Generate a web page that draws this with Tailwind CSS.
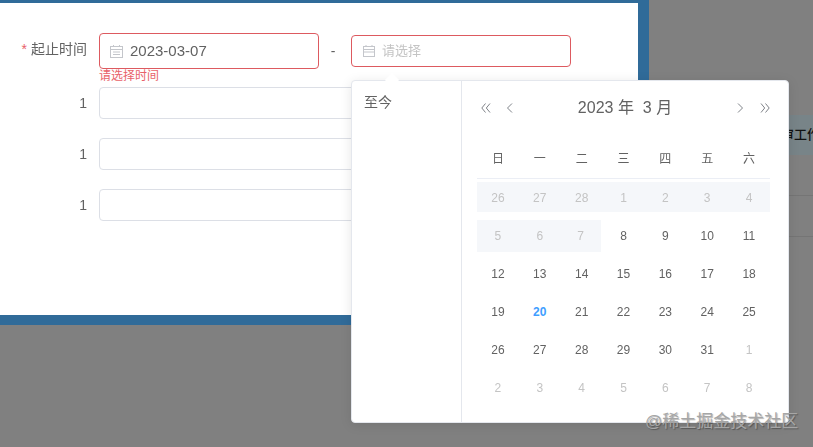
<!DOCTYPE html>
<html lang="zh-CN">
<head>
    <meta charset="UTF-8">
    <title>起止时间</title>
    <script src="https://cdn.jsdelivr.net/npm/@tailwindcss/browser@4"></script>
</head>
<body class="relative flex h-[447px] w-[813px] overflow-hidden bg-[#808080] font-['Liberation_Sans','Noto_Sans_CJK_SC',sans-serif] text-[#606266]">

    <!-- Dialog -->
    <div class="h-[325px] w-[649px] shrink-0 bg-[#306b99] pt-[3px] pr-[11px] pb-[10px]">
        <div class="h-full bg-white pt-[30px]">

            <div class="flex items-center">
                <label class="w-[87px] pb-[3px] text-right text-[14px] leading-[33px]"><span class="mr-1 text-[#e8626a]">*</span><span class="grayscale">起止时间</span></label>
                <div class="ml-[12px] flex h-[36px] w-[220px] items-center rounded border border-[#dd5a60] pl-[10px] text-[15px]">
                    <svg class="mr-[7px] h-[13px] w-[13px] text-[#c4c6cb]" viewBox="0 0 13 13" fill="none" stroke="currentColor"><rect x="0.5" y="1.5" width="12" height="11"/><path d="M0.5 4.5h12M3 7h7M3 9.5h7M3.500 0v2M9.500 0v2"/></svg>
                    <span class="grayscale">2023-03-07</span>
                </div>
                <span class="w-[32px] pr-[4px] text-center text-[14px] grayscale">-</span>
                <div class="flex h-[32px] w-[220px] items-center rounded border border-[#dd5a60] pl-[11px] text-[13px] text-[#c0c4cc]">
                    <svg class="mr-[7px] h-[12px] w-[12px] text-[#c4c6cb]" viewBox="0 0 12 12" fill="none" stroke="currentColor"><rect x="0.5" y="1.5" width="11" height="10"/><path d="M0.5 4.500h11M0.5 7h11M3 0v2M9 0v2"/></svg>
                    <span class="grayscale">请选择</span>
                </div>
            </div>
            <p class="ml-[99px] h-[18px] text-[12px] leading-[14px] text-[#e8626a]">请选择时间</p>

            <div class="flex flex-col gap-[19px]">
                <div class="flex items-center">
                    <label class="w-[87px] text-right text-[14px] grayscale">1</label>
                    <div class="ml-[12px] h-[32px] w-[300px] rounded border border-[#dcdfe6]"></div>
                </div>
                <div class="flex items-center">
                    <label class="w-[87px] text-right text-[14px] grayscale">1</label>
                    <div class="ml-[12px] h-[32px] w-[300px] rounded border border-[#dcdfe6]"></div>
                </div>
                <div class="flex items-center">
                    <label class="w-[87px] text-right text-[14px] grayscale">1</label>
                    <div class="ml-[12px] h-[32px] w-[300px] rounded border border-[#dcdfe6]"></div>
                </div>
            </div>
        </div>
    </div>

    <!-- Page behind the mask -->
    <div class="flex-1 pt-[115px]">
        <div class="flex h-[40px] items-center bg-[#788488] pl-[132px] text-[13px] whitespace-nowrap text-[#111]"><span class="font-medium">审工作</span></div>
        <div class="h-[41px] border-b border-[#757575]"></div>
        <div class="h-[41px] border-b border-[#757575]"></div>
    </div>

    <!-- Date picker popover -->
    <div class="absolute top-[80px] left-[351px] flex h-[343px] w-[438px] rounded border border-[#e4e7ed] bg-white shadow-[0_2px_12px_rgba(0,0,0,0.1)]">
        <div class="absolute -top-[6px] left-[35px] h-[10px] w-[10px] rotate-45 bg-white"></div>
        <div class="relative w-[110px] border-r border-[#e4e7ed] pt-[13px] pl-[12px] text-[14px] leading-[16px]"><span class="grayscale">至今</span></div>
        <div class="relative flex-1 pt-[17px] pr-[18px] pl-[15px]">
            <div class="flex h-[20px] items-center">
                <svg class="ml-[4px] h-[10px] w-[10px]" viewBox="0 0 10 10" fill="none" stroke="#7f8288"><path d="M4.500 0.500 0.800 5l3.700 4.500M9 0.500 5.300 5 9 9.500"/></svg>
                <svg class="ml-[15px] h-[10px] w-[7px]" viewBox="0 0 7 10" fill="none" stroke="#7f8288"><path d="M6 0.500 1.500 5 6 9.500"/></svg>
                <span class="flex-1 text-center text-[16px] whitespace-pre grayscale">2023 年  3 月</span>
                <svg class="h-[10px] w-[7px]" viewBox="0 0 7 10" fill="none" stroke="#7f8288"><path d="M1 0.500 5.500 5 1 9.500"/></svg>
                <svg class="ml-[16px] h-[10px] w-[10px]" viewBox="0 0 10 10" fill="none" stroke="#7f8288"><path d="M1 0.500 4.700 5 1 9.500M5.500 0.500 9.200 5 5.500 9.500"/></svg>
            </div>

            <div class="mt-[21px] grid h-[40px] grid-cols-7 border-b border-[#ebeef5] text-center text-[12px] leading-[40px]">
                <span class="grayscale">日</span><span class="grayscale">一</span><span class="grayscale">二</span><span class="grayscale">三</span><span class="grayscale">四</span><span class="grayscale">五</span><span class="grayscale">六</span>
            </div>

            <div class="grid grid-cols-7 text-center text-[12px]">
                <div class="mt-[3px] mb-[5px] h-[30px] bg-[#f5f7fa] leading-[32px] text-[#c0c4cc]"><span class="grayscale">26</span></div>
                <div class="mt-[3px] mb-[5px] h-[30px] bg-[#f5f7fa] leading-[32px] text-[#c0c4cc]"><span class="grayscale">27</span></div>
                <div class="mt-[3px] mb-[5px] h-[30px] bg-[#f5f7fa] leading-[32px] text-[#c0c4cc]"><span class="grayscale">28</span></div>
                <div class="mt-[3px] mb-[5px] h-[30px] bg-[#f5f7fa] leading-[32px] text-[#c0c4cc]"><span class="grayscale">1</span></div>
                <div class="mt-[3px] mb-[5px] h-[30px] bg-[#f5f7fa] leading-[32px] text-[#c0c4cc]"><span class="grayscale">2</span></div>
                <div class="mt-[3px] mb-[5px] h-[30px] bg-[#f5f7fa] leading-[32px] text-[#c0c4cc]"><span class="grayscale">3</span></div>
                <div class="mt-[3px] mb-[5px] h-[30px] bg-[#f5f7fa] leading-[32px] text-[#c0c4cc]"><span class="grayscale">4</span></div>

                <div class="my-[3px] h-[32px] bg-[#f5f7fa] leading-[32px] text-[#c0c4cc]"><span class="grayscale">5</span></div>
                <div class="my-[3px] h-[32px] bg-[#f5f7fa] leading-[32px] text-[#c0c4cc]"><span class="grayscale">6</span></div>
                <div class="my-[3px] mr-[2px] h-[32px] bg-[#f5f7fa] leading-[32px] text-[#c0c4cc]"><span class="grayscale">7</span></div>
                <div class="my-[3px] h-[32px] leading-[32px] grayscale">8</div>
                <div class="my-[3px] h-[32px] leading-[32px] grayscale">9</div>
                <div class="my-[3px] h-[32px] leading-[32px] grayscale">10</div>
                <div class="my-[3px] h-[32px] leading-[32px] grayscale">11</div>

                <div class="my-[3px] h-[32px] leading-[32px] grayscale">12</div>
                <div class="my-[3px] h-[32px] leading-[32px] grayscale">13</div>
                <div class="my-[3px] h-[32px] leading-[32px] grayscale">14</div>
                <div class="my-[3px] h-[32px] leading-[32px] grayscale">15</div>
                <div class="my-[3px] h-[32px] leading-[32px] grayscale">16</div>
                <div class="my-[3px] h-[32px] leading-[32px] grayscale">17</div>
                <div class="my-[3px] h-[32px] leading-[32px] grayscale">18</div>

                <div class="my-[3px] h-[32px] leading-[32px] grayscale">19</div>
                <div class="my-[3px] h-[32px] leading-[32px] font-bold text-[#409eff]">20</div>
                <div class="my-[3px] h-[32px] leading-[32px] grayscale">21</div>
                <div class="my-[3px] h-[32px] leading-[32px] grayscale">22</div>
                <div class="my-[3px] h-[32px] leading-[32px] grayscale">23</div>
                <div class="my-[3px] h-[32px] leading-[32px] grayscale">24</div>
                <div class="my-[3px] h-[32px] leading-[32px] grayscale">25</div>

                <div class="my-[3px] h-[32px] leading-[32px] grayscale">26</div>
                <div class="my-[3px] h-[32px] leading-[32px] grayscale">27</div>
                <div class="my-[3px] h-[32px] leading-[32px] grayscale">28</div>
                <div class="my-[3px] h-[32px] leading-[32px] grayscale">29</div>
                <div class="my-[3px] h-[32px] leading-[32px] grayscale">30</div>
                <div class="my-[3px] h-[32px] leading-[32px] grayscale">31</div>
                <div class="my-[3px] h-[32px] leading-[32px] text-[#c0c4cc] grayscale">1</div>

                <div class="my-[3px] h-[32px] leading-[32px] text-[#c0c4cc] grayscale">2</div>
                <div class="my-[3px] h-[32px] leading-[32px] text-[#c0c4cc] grayscale">3</div>
                <div class="my-[3px] h-[32px] leading-[32px] text-[#c0c4cc] grayscale">4</div>
                <div class="my-[3px] h-[32px] leading-[32px] text-[#c0c4cc] grayscale">5</div>
                <div class="my-[3px] h-[32px] leading-[32px] text-[#c0c4cc] grayscale">6</div>
                <div class="my-[3px] h-[32px] leading-[32px] text-[#c0c4cc] grayscale">7</div>
                <div class="my-[3px] h-[32px] leading-[32px] text-[#c0c4cc] grayscale">8</div>
            </div>
        </div>
    </div>

    <!-- Watermark -->
    <div class="absolute top-[412px] left-[645px] text-[17px] leading-[20px] whitespace-nowrap text-[#a6a6a6] [text-shadow:1px_1px_1px_rgba(0,0,0,0.3)]">@稀土掘金技术社区</div>

</body>
</html>
